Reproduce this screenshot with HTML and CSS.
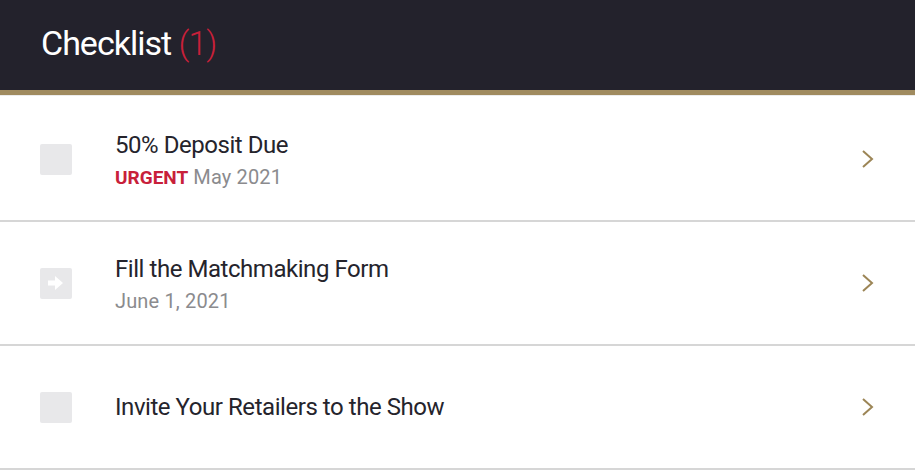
FILE: index.html
```html
<!DOCTYPE html>
<html>
<head>
<meta charset="utf-8">
<link rel="stylesheet" href="styles.css">
</head>
<body>
<header class="header">
  <h1 class="title">Checklist <span class="count">(1)</span></h1>
</header>
<ul class="list">
  <li class="item">
    <span class="box"></span>
    <div class="text">
      <div class="name">50% Deposit Due</div>
      <div class="meta"><span class="urgent">URGENT</span> May 2021</div>
    </div>
    <svg class="chev" width="14" height="20" viewBox="0 0 14 20"><path d="M2 2 L11 10 L2 18" fill="none" stroke="#9c8556" stroke-width="2"/></svg>
  </li>
  <li class="item">
    <span class="box">
      <svg width="20" height="16" viewBox="0 0 20 16"><path d="M2 5.5 H9 V1 L17 8 L9 15 V10.5 H2 Z" fill="#fff"/></svg>
    </span>
    <div class="text">
      <div class="name">Fill the Matchmaking Form</div>
      <div class="meta">June 1, 2021</div>
    </div>
    <svg class="chev" width="14" height="20" viewBox="0 0 14 20"><path d="M2 2 L11 10 L2 18" fill="none" stroke="#9c8556" stroke-width="2"/></svg>
  </li>
  <li class="item">
    <span class="box"></span>
    <div class="text">
      <div class="name">Invite Your Retailers to the Show</div>
    </div>
    <svg class="chev" width="14" height="20" viewBox="0 0 14 20"><path d="M2 2 L11 10 L2 18" fill="none" stroke="#9c8556" stroke-width="2"/></svg>
  </li>
</ul>
</body>
</html>
```
FILE: styles.css
```css
* { box-sizing: border-box; }
html, body { margin: 0; padding: 0; background: #fff; }
body { font-family: Roboto, "Liberation Sans", sans-serif; }
.header {
  height: 95px;
  background: #23222c;
  border-bottom: 5px solid #a08b5f;
  display: flex;
  align-items: center;
  padding-left: 41px;
  padding-bottom: 4px;
}
.title {
  margin: 0;
  font-weight: 400;
  font-size: 34px;
  color: #fff;
  letter-spacing: -1px;
}
.count { color: #c8203a; font-weight: 300; }
.list {
  list-style: none;
  margin: 0;
  padding: 2px 0 0;
  border-top: 1px solid #ececec;
}
.item {
  height: 124px;
  display: flex;
  align-items: center;
  padding-left: 40px;
  padding-right: 40px;
  border-bottom: 2px solid #d6d6d6;
}
.box {
  width: 32px;
  height: 31px;
  border-radius: 2px;
  background: #e8e8ea;
  flex: none;
  display: flex;
  align-items: center;
  justify-content: center;
}
.text { flex: 1; margin-left: 43px; }
.name { font-size: 24px; color: #25242c; letter-spacing: -0.45px; line-height: 32px; }
.meta { font-size: 20px; color: #8b8b8e; margin-top: 4px; line-height: 24px; letter-spacing: 0.15px; }
.urgent { color: #c8203a; font-weight: 700; font-size: 19px; letter-spacing: 0; }
.chev { flex: none; }
```
